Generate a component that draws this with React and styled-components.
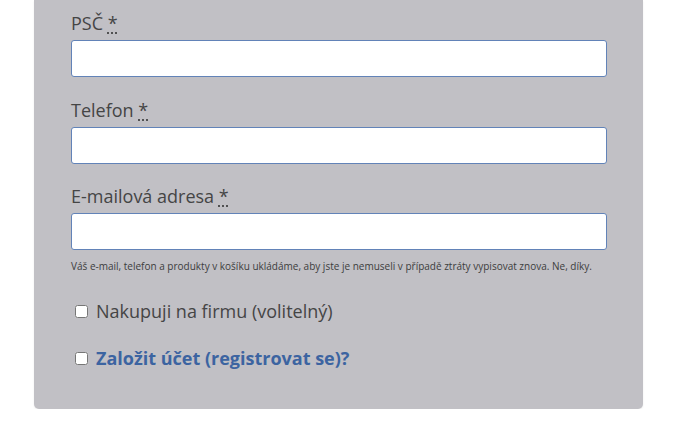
import styled, {createGlobalStyle} from 'styled-components';

const Global = createGlobalStyle`
  body {
    margin: 0;
    background: #ffffff;
    font-family: "Open Sans", "Noto Sans", sans-serif;
  }
`;

const Panel = styled.div`
  margin-left: 34px;
  width: 609px;
  box-sizing: border-box;
  padding: 10px 36px 38px 37px;
  background: #c1c0c5;
  border-radius: 0 0 5px 5px;
  box-shadow: 0 1px 2px rgba(0, 0, 0, 0.08);
`;

const Field = styled.div`
  display: flex;
  flex-direction: column;
  gap: 4px;
  margin-bottom: ${({last}) => (last ? '0' : '19.5px')};
`;

const Label = styled.label`
  font-size: 18px;
  line-height: 26px;
  color: #454545;
`;

const Req = styled.abbr`
  text-decoration: underline dotted;
  text-underline-offset: 3px;
  cursor: help;
`;

const Input = styled.input`
  height: 37px;
  box-sizing: border-box;
  border: 1px solid #6283b8;
  border-radius: 3px;
  background: #fff;
  padding: 0 10px;
  font: inherit;
  font-size: 16px;
  outline: none;
`;

const Note = styled.p`
  margin: 8px 0 0;
  font-size: 10px;
  line-height: 16px;
  color: #3d3d3d;
`;

const CheckRow = styled.label`
  display: flex;
  align-items: center;
  margin-top: ${({gap}) => gap}px;
  font-size: 18px;
  line-height: 26px;
  color: ${({link}) => (link ? '#3c64a1' : '#454545')};
  font-weight: ${({link}) => (link ? 700 : 400)};

  input {
    width: 13px;
    height: 13px;
    margin: 0 8px 0 4px;
  }
`;

const fields = [
  {label: 'PSČ', type: 'text'},
  {label: 'Telefon', type: 'tel'},
  {label: 'E-mailová adresa', type: 'email'},
];

export default function App() {
  return (
    <>
      <Global/>
      <Panel>
        {fields.map((f, i) => (
          <Field key={f.label} last={i === fields.length - 1}>
            <Label>{f.label} <Req title="povinné">*</Req></Label>
            <Input type={f.type}/>
          </Field>
        ))}
        <Note>
          Váš e-mail, telefon a produkty v košíku ukládáme, aby jste je nemuseli v případě ztráty vypisovat znova. Ne, díky.
        </Note>
        <CheckRow gap={24}>
          <input type="checkbox"/>
          Nakupuji na firmu (volitelný)
        </CheckRow>
        <CheckRow gap={21} link>
          <input type="checkbox"/>
          Založit účet (registrovat se)?
        </CheckRow>
      </Panel>
    </>
  );
}
